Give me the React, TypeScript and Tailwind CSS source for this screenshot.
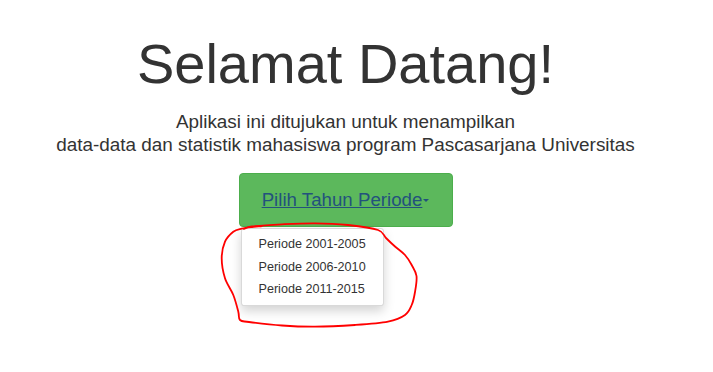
import React from "react";

const items = ["Periode 2001-2005", "Periode 2006-2010", "Periode 2011-2015"];

// hand-drawn red loop round the menu, as page coordinates
const loop: [number, number][] = [
  [244, 229], [252, 226.5], [282, 224.3], [315, 223.3], [348, 225], [378, 230],
  [386, 238], [395, 246.5], [405, 255], [411.7, 265], [416.5, 276], [415, 292],
  [411.7, 305], [405, 315], [388, 321.7], [355, 325], [315, 326.7], [282, 325.5],
  [249, 322], [240, 320], [238.3, 311.7], [233.3, 295], [225, 278.3], [221.7, 258.3],
  [225, 241.7], [233.3, 231.7], [241.7, 228.6], [252, 227], [262, 226],
];

function smoothPath(pts: [number, number][]) {
  let d = `M${pts[0][0]},${pts[0][1]}`;
  for (let i = 0; i < pts.length - 1; i++) {
    const p0 = pts[i - 1] ?? pts[i];
    const p1 = pts[i];
    const p2 = pts[i + 1];
    const p3 = pts[i + 2] ?? p2;
    const c1x = p1[0] + (p2[0] - p0[0]) / 6;
    const c1y = p1[1] + (p2[1] - p0[1]) / 6;
    const c2x = p2[0] - (p3[0] - p1[0]) / 6;
    const c2y = p2[1] - (p3[1] - p1[1]) / 6;
    d += ` C${c1x.toFixed(1)},${c1y.toFixed(1)} ${c2x.toFixed(1)},${c2y.toFixed(1)} ${p2[0]},${p2[1]}`;
  }
  return d;
}

export default function App() {
  return (
    <div className="relative min-h-[372px] bg-white font-['Liberation_Sans',Arial,sans-serif] text-[#333]">
      <div className="w-[691px] text-center">
        <h1 className="pt-[33px] text-[56px] leading-[62px]">Selamat Datang!</h1>
        <p className="mt-[15px] text-[18.9px] leading-[23px]">
          Aplikasi ini ditujukan untuk menampilkan
          <br />
          data-data dan statistik mahasiswa program Pascasarjana Universitas
        </p>
        <div className="relative mt-[17px] inline-block text-left">
          <button className="flex h-[54px] w-[214px] items-center justify-center rounded-[4px] border border-[#4cae4c] bg-[#5cb85c] text-[18.7px] text-[#23527c] underline">
            Pilih Tahun Periode
            <span className="ml-[1px] inline-block border-x-[3.5px] border-t-[3.6px] border-x-transparent border-t-[#23527c]" />
          </button>
          <ul className="absolute left-[2px] top-[55px] w-[143px] rounded-[3.6px] border border-black/15 bg-white py-[4px] shadow-[0_5px_11px_rgba(0,0,0,0.175)]">
            {items.map((it) => (
              <li key={it} className="h-[22.5px] px-[17px] text-[12.6px] leading-[22.5px] whitespace-nowrap text-[#333]">
                {it}
              </li>
            ))}
          </ul>
        </div>
      </div>
      <svg className="pointer-events-none absolute left-0 top-0" width="713" height="372">
        <path d={smoothPath(loop)} fill="none" stroke="#ff0000" strokeWidth="1.8" strokeLinecap="round" strokeLinejoin="round" />
      </svg>
    </div>
  );
}
